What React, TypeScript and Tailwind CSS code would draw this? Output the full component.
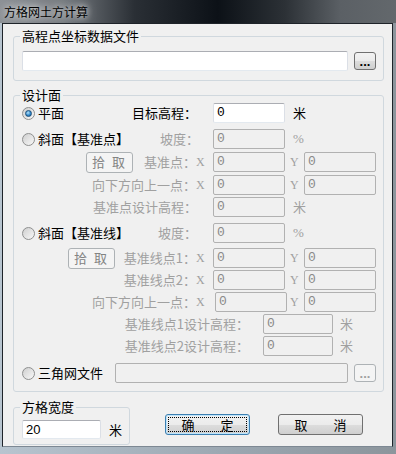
import { type FC, type ReactNode } from 'react';

const Radio: FC<{ checked?: boolean }> = ({ checked }) => (
  <span className="w-[13px] h-[13px] rounded-full border border-[#8e8f8f] bg-[linear-gradient(135deg,#cfcfcf,#f8f8f8)] flex items-center justify-center shrink-0">
    {checked && (
      <span className="w-[7px] h-[7px] rounded-full border border-[#1c4f7a] bg-[radial-gradient(circle_at_40%_35%,#b4e2fc,#2a83c7_60%,#1a5b91)]" />
    )}
  </span>
);

const TextBox: FC<{ className?: string; value?: string; disabled?: boolean }> = ({ className = '', value = '', disabled }) => (
  <div
    className={
      'h-[20px] rounded-[2px] border pl-[3px] flex items-center shrink-0 font-["Liberation_Mono",monospace] text-[13px] ' +
      (disabled
        ? 'border-[#b1b1b1] bg-[#f0f0f0] text-[#8a8a8a] '
        : 'border-[#abadb3] border-x-[#dbdfe6] border-b-[#e3e9ef] bg-white text-black ') +
      className
    }
  >
    {value}
  </div>
);

const Pick: FC<{ className?: string }> = ({ className = '' }) => (
  <div className={'w-[47px] h-[21px] rounded-[3px] border border-[#adb2b5] bg-[#f4f4f4] text-[#838383] flex items-center justify-center tracking-[2px] shrink-0 ' + className}>
    拾 取
  </div>
);

const Dots: FC<{ disabled?: boolean; className?: string }> = ({ disabled, className = '' }) => (
  <div
    className={
      'w-[22px] h-[18px] rounded-[3px] border flex items-end justify-center pb-[2px] shrink-0 font-["Liberation_Sans",sans-serif] text-[13px] leading-[10px] font-bold ' +
      (disabled
        ? 'border-[#adb2b5] bg-[#f4f4f4] text-[#a0a0a0] '
        : 'border-[#707070] bg-[linear-gradient(#f2f2f2,#ebebeb_50%,#dddddd_50%,#cfcfcf)] text-black ') +
      className
    }
  >
    ...
  </div>
);

const XY: FC<{ children: ReactNode; className?: string }> = ({ children, className = '' }) => (
  <span className={'font-["Liberation_Serif",serif] text-[12px] text-[#a0a0a0] ' + className}>{children}</span>
);

const Group: FC<{ title: string; className?: string; children: ReactNode }> = ({ title, className = '', children }) => (
  <fieldset className={'border border-[#d0d8de] rounded-[3px] ' + className}>
    <legend className="ml-[6px] px-[2px] leading-[14px]">{title}</legend>
    {children}
  </fieldset>
);

export default function App() {
  const gray = 'text-[#a0a0a0]';
  return (
    <div className="w-[396px] h-[454px] overflow-hidden flex flex-col bg-[linear-gradient(90deg,#b7c4cf,#9aa6b0_60%,#8c959c)] font-['Noto_Sans_CJK_SC',sans-serif] text-[13px] text-black">
      {/* Title bar */}
      <div className="h-[23px] shrink-0 flex items-center pl-[4px] bg-[linear-gradient(90deg,#8d9196_0%,#767b80_16%,#2a2f35_34%,#0c1117_55%,#2c3136_72%,#5b6065_86%,#63686c_100%)]">
        <span className="text-[12px] leading-[14px] text-black [text-shadow:0_0_6px_rgba(255,255,255,0.9),0_0_12px_rgba(255,255,255,0.6)]">方格网土方计算</span>
      </div>

      <div className="flex-1 flex pl-[2px] pr-[3px] pb-[7px]">
        <div className="flex-1 flex flex-col border border-[#1e2329] border-b-[#7d8893] bg-[#f0f0f0]">
          {/* Data file */}
          <Group title="高程点坐标数据文件" className="ml-[10px] mt-[5px] w-[371px] pb-[9px]">
            <div className="mt-[8px] pl-[8px] flex items-center">
              <TextBox className="w-[326px]" />
              <Dots className="ml-[6px]" />
            </div>
          </Group>

          {/* Design surface */}
          <Group title="设计面" className="ml-[10px] mt-[7px] w-[371px] pb-[8px]">
            <div className="flex flex-col leading-[20px]">
              <div className="mt-[1px] h-[20px] flex items-center">
                <div className="w-[191px] flex items-center pl-[8px]">
                  <Radio checked />
                  <span className="ml-[3px]">平面</span>
                  <span className="ml-auto pr-[8px]">目标高程：</span>
                </div>
                <TextBox className="ml-[8px] w-[72px]" value="0" />
                <span className="ml-[8px]">米</span>
              </div>

              <div className="mt-[6px] h-[20px] flex items-center">
                <div className="w-[191px] flex items-center pl-[8px]">
                  <Radio />
                  <span className="ml-[3px]">斜面【基准点】</span>
                  <span className={'ml-auto pr-[6px] ' + gray}>坡度：</span>
                </div>
                <TextBox className="ml-[8px] w-[72px]" value="0" disabled />
                <span className={'ml-[8px] font-["Liberation_Serif",serif] ' + gray}>%</span>
              </div>

              <div className="mt-[3px] h-[20px] flex items-center">
                <div className="w-[191px] flex items-center pl-[72px] pr-[1px]">
                  <Pick />
                  <span className={'ml-auto ' + gray}>基准点：</span>
                  <XY className="w-[8px]">X</XY>
                </div>
                <TextBox className="ml-[8px] w-[72px]" value="0" disabled />
                <XY className="ml-[5px] w-[14px]">Y</XY>
                <TextBox className="w-[72px]" value="0" disabled />
              </div>

              <div className="mt-[3px] h-[20px] flex items-center">
                <div className="w-[191px] flex items-center justify-end pr-[1px]">
                  <span className={gray}>向下方向上一点：</span>
                  <XY className="w-[8px]">X</XY>
                </div>
                <TextBox className="ml-[8px] w-[72px]" value="0" disabled />
                <XY className="ml-[5px] w-[14px]">Y</XY>
                <TextBox className="w-[72px]" value="0" disabled />
              </div>

              <div className="mt-[2px] h-[20px] flex items-center">
                <div className="w-[191px] flex items-center justify-end pr-[8px]">
                  <span className={gray}>基准点设计高程：</span>
                </div>
                <TextBox className="ml-[8px] w-[72px]" value="0" disabled />
                <span className={'ml-[8px] ' + gray}>米</span>
              </div>

              <div className="mt-[6px] h-[20px] flex items-center">
                <div className="w-[191px] flex items-center pl-[8px]">
                  <Radio />
                  <span className="ml-[3px]">斜面【基准线】</span>
                  <span className={'ml-auto pr-[8px] ' + gray}>坡度：</span>
                </div>
                <TextBox className="ml-[8px] w-[72px]" value="0" disabled />
                <span className={'ml-[8px] font-["Liberation_Serif",serif] ' + gray}>%</span>
              </div>

              <div className="mt-[5px] h-[20px] flex items-center">
                <div className="w-[191px] flex items-center pl-[54px] pr-[1px]">
                  <Pick />
                  <span className={'ml-auto ' + gray}>基准线点1：</span>
                  <XY className="w-[8px]">X</XY>
                </div>
                <TextBox className="ml-[8px] w-[72px]" value="0" disabled />
                <XY className="ml-[5px] w-[14px]">Y</XY>
                <TextBox className="w-[72px]" value="0" disabled />
              </div>

              <div className="mt-[2px] h-[20px] flex items-center">
                <div className="w-[191px] flex items-center justify-end pr-[1px]">
                  <span className={gray}>基准线点2：</span>
                  <XY className="w-[8px]">X</XY>
                </div>
                <TextBox className="ml-[8px] w-[72px]" value="0" disabled />
                <XY className="ml-[5px] w-[14px]">Y</XY>
                <TextBox className="w-[72px]" value="0" disabled />
              </div>

              <div className="mt-[2px] h-[20px] flex items-center">
                <div className="w-[191px] flex items-center justify-end pr-[1px]">
                  <span className={gray}>向下方向上一点：</span>
                  <XY className="w-[8px]">X</XY>
                </div>
                <TextBox className="ml-[10px] w-[72px]" value="0" disabled />
                <XY className="ml-[3px] w-[14px]">Y</XY>
                <TextBox className="w-[72px]" value="0" disabled />
              </div>

              <div className="mt-[2px] h-[20px] flex items-center">
                <div className="w-[236px] flex items-center justify-end pr-[1px]">
                  <span className={gray}>基准线点1设计高程：</span>
                </div>
                <TextBox className="ml-[13px] w-[70px]" value="0" disabled />
                <span className={'ml-[7px] ' + gray}>米</span>
              </div>

              <div className="mt-[2px] h-[20px] flex items-center">
                <div className="w-[236px] flex items-center justify-end pr-[1px]">
                  <span className={gray}>基准线点2设计高程：</span>
                </div>
                <TextBox className="ml-[13px] w-[70px]" value="0" disabled />
                <span className={'ml-[7px] ' + gray}>米</span>
              </div>

              <div className="mt-[7px] h-[20px] flex items-center pl-[8px]">
                <Radio />
                <span className="ml-[3px]">三角网文件</span>
                <TextBox className="ml-[12px] w-[233px]" disabled />
                <Dots className="ml-[6px]" disabled />
              </div>
            </div>
          </Group>

          {/* Bottom: grid width + buttons */}
          <div className="flex items-start">
            <Group title="方格宽度" className="ml-[10px] mt-[8px] w-[117px] pb-[4px]">
              <div className="mt-[6px] pl-[8px] flex items-center">
                <TextBox className="w-[79px] !h-[19px] font-['Liberation_Sans',sans-serif]" value="20" />
                <span className="ml-[8px]">米</span>
              </div>
            </Group>

            <div className="ml-[35px] mt-[22px] w-[85px] h-[21px] rounded-[3px] border border-[#3c7fb1] bg-[linear-gradient(#f2f2f2,#ebebeb_50%,#dddddd_50%,#cfcfcf)] shadow-[inset_0_0_0_1px_#bde4fb] flex p-[2px]">
              <div className="flex-1 border border-dotted border-black flex items-center justify-center leading-[14px]">
                确　　定
              </div>
            </div>
            <div className="ml-[28px] mt-[22px] w-[85px] h-[21px] rounded-[3px] border border-[#707070] bg-[linear-gradient(#f2f2f2,#ebebeb_50%,#dddddd_50%,#cfcfcf)] flex items-center justify-center">
              取　　消
            </div>
          </div>
        </div>
      </div>
    </div>
  );
}
